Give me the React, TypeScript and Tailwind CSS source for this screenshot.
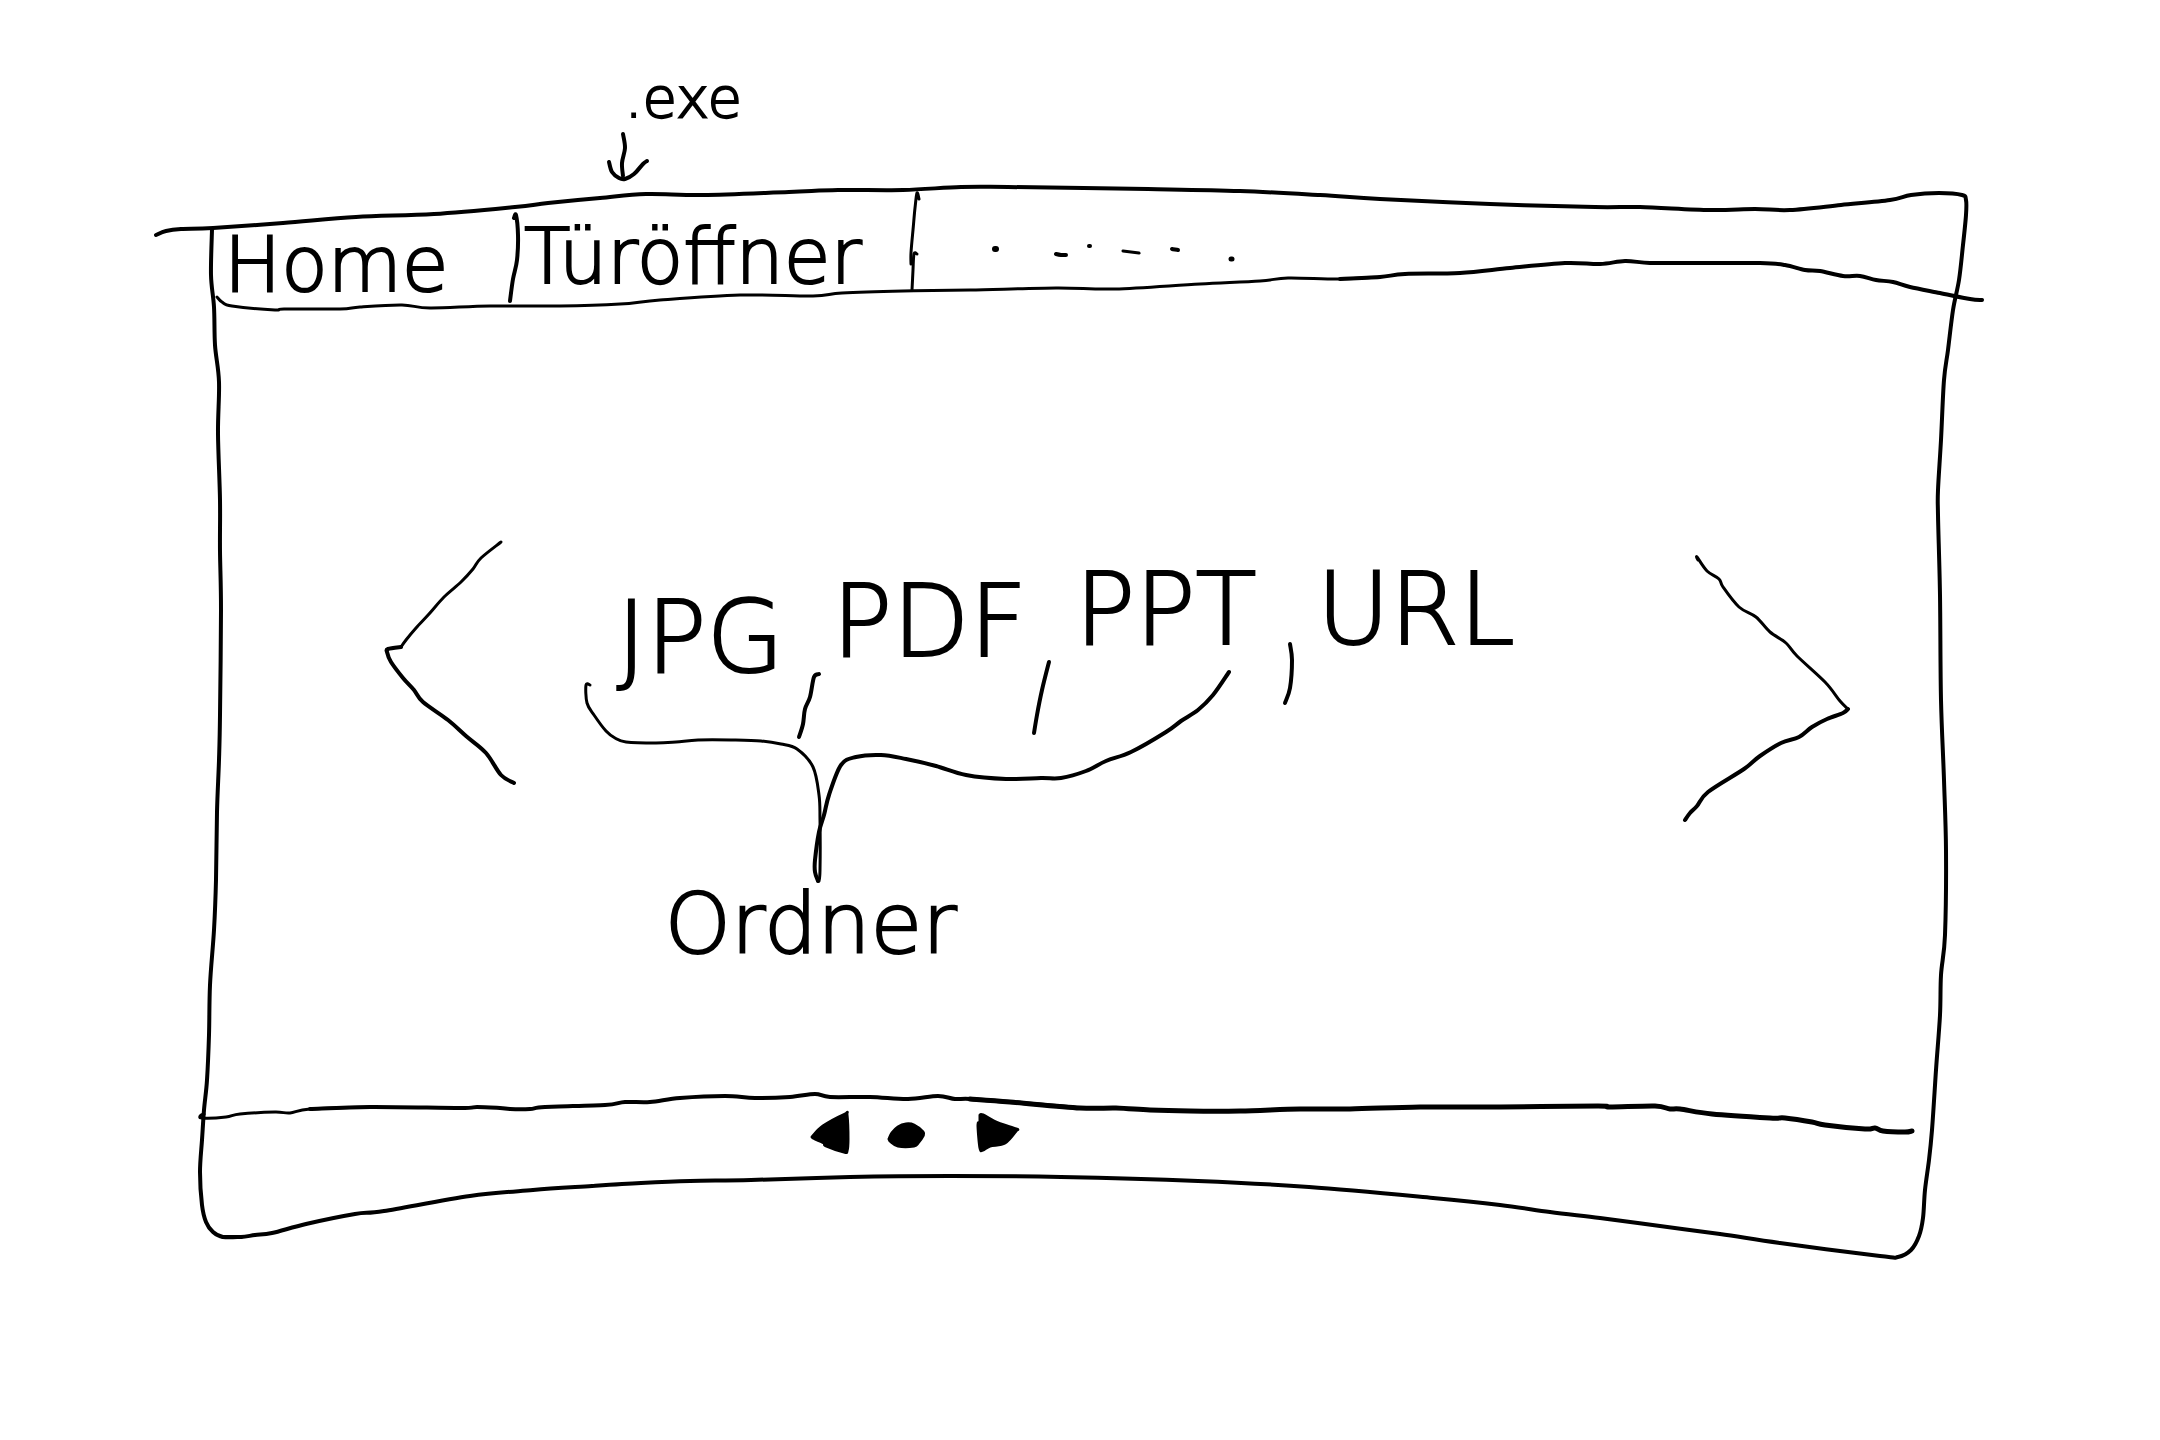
type Point = [number, number];
type Stroke = { pts: Point[]; w?: number; fill?: boolean };

/** Turns pen samples into a smooth curve that passes through each of them. */
function penPath(pts: Point[], closed = false): string {
  if (pts.length === 1) {
    const [x, y] = pts[0];
    return `M${x} ${y}l1 0`;
  }
  const tension = 6;
  let d = `M${pts[0][0]} ${pts[0][1]}`;
  for (let i = 0; i < pts.length - 1; i++) {
    const p0 = pts[Math.max(i - 1, 0)];
    const p1 = pts[i];
    const p2 = pts[i + 1];
    const p3 = pts[Math.min(i + 2, pts.length - 1)];
    const c1x = p1[0] + (p2[0] - p0[0]) / tension;
    const c1y = p1[1] + (p2[1] - p0[1]) / tension;
    const c2x = p2[0] - (p3[0] - p1[0]) / tension;
    const c2y = p2[1] - (p3[1] - p1[1]) / tension;
    d += `C${c1x.toFixed(1)} ${c1y.toFixed(1)} ${c2x.toFixed(1)} ${c2y.toFixed(1)} ${p2[0]} ${p2[1]}`;
  }
  return closed ? `${d}Z` : d;
}

function Ink({ box, strokes, className }: { box: string; strokes: Stroke[]; className: string }) {
  return (
    <svg
      viewBox={box}
      preserveAspectRatio="none"
      aria-hidden="true"
      className={`pointer-events-none shrink-0 overflow-visible ${className}`}
    >
      {strokes.map((s, i) => (
        <path
          key={i}
          d={penPath(s.pts, s.fill)}
          fill={s.fill ? "currentColor" : "none"}
          stroke="currentColor"
          strokeWidth={s.w ?? 4}
          strokeLinecap="round"
          strokeLinejoin="round"
          vectorEffect="non-scaling-stroke"
        />
      ))}
    </svg>
  );
}

const frame: Stroke[] = [
  // top edge, right-hand side and bottom edge
  {
    w: 4,
    pts: [
      [156, 235], [166, 231], [181, 229], [213, 228], [283, 223], [356, 217], [434, 214], [515, 207], [548, 203],
      [600, 198], [646, 194], [703, 195], [789, 192], [838, 190], [903, 190], [961, 187], [1008, 187], [1148, 189],
      [1240, 191], [1320, 195], [1380, 199], [1490, 204], [1595, 207], [1640, 207], [1710, 210], [1755, 209],
      [1790, 210], [1841, 205], [1890, 200], [1911, 195], [1939, 193], [1962, 195], [1966, 200], [1966, 215],
      [1963, 245], [1959, 280], [1953, 310], [1948, 350], [1944, 380], [1941, 440], [1938, 490], [1938, 515],
      [1940, 595], [1941, 700], [1944, 780], [1946, 850], [1945, 935], [1941, 975], [1940, 1015], [1936, 1070],
      [1932, 1130], [1929, 1160], [1925, 1190], [1923, 1218], [1919, 1236], [1911, 1250], [1898, 1257],
      [1880, 1256], [1780, 1243], [1720, 1234], [1660, 1226], [1600, 1218], [1550, 1212], [1500, 1205],
      [1433, 1198], [1309, 1187], [1198, 1181], [1061, 1177], [950, 1176], [850, 1177], [751, 1180], [690, 1181],
      [641, 1183], [592, 1186], [533, 1190], [470, 1196], [384, 1211], [355, 1214], [306, 1224], [272, 1233],
      [255, 1235], [241, 1237], [223, 1237],
    ],
  },
  // left-hand side
  {
    w: 4,
    pts: [
      [241, 1237], [223, 1237], [213, 1232], [206, 1222], [202, 1205], [200, 1172], [202, 1140], [204, 1110],
      [207, 1080], [209, 1035], [210, 985], [214, 930], [216, 880], [217, 812], [219, 760], [220, 715],
      [221, 610], [220, 551], [220, 500], [218, 434], [219, 382], [215, 345], [214, 307], [211, 275], [212, 230],
    ],
  },
  // lower edge of the tab bar
  {
    w: 3,
    pts: [
      [217, 297], [222, 302], [232, 306], [275, 310], [284, 309], [340, 309], [360, 307], [402, 305], [430, 308],
      [490, 306], [560, 306], [620, 304], [660, 300], [740, 295], [813, 296], [842, 293], [903, 291], [970, 290],
      [1056, 288], [1115, 289], [1200, 284], [1260, 281], [1288, 278], [1340, 279], [1380, 277],
    ],
  },
  {
    w: 4,
    pts: [
      [1340, 279], [1380, 277], [1405, 274], [1460, 273], [1510, 268], [1565, 263], [1600, 264], [1625, 261],
      [1650, 263], [1690, 263], [1760, 263], [1785, 265], [1805, 270], [1820, 271], [1843, 276], [1860, 276],
      [1876, 280], [1893, 282], [1910, 287], [1940, 293], [1970, 299], [1982, 300],
    ],
  },
  // upper edge of the control bar
  {
    w: 3,
    pts: [
      [204, 1114], [201, 1115], [202, 1118], [226, 1117], [240, 1114], [275, 1112], [290, 1113], [310, 1109],
      [370, 1107],
    ],
  },
  {
    w: 4,
    pts: [
      [310, 1109], [370, 1107], [460, 1108], [477, 1107], [500, 1108], [510, 1109], [530, 1109], [545, 1107],
      [605, 1105], [625, 1102], [650, 1102], [680, 1098], [725, 1096], [755, 1098], [790, 1097], [815, 1094],
      [830, 1097], [870, 1097], [908, 1099], [938, 1096], [955, 1099], [970, 1099], [1010, 1102], [1080, 1108],
    ],
  },
  {
    w: 5,
    pts: [
      [970, 1099], [1010, 1102], [1080, 1108], [1116, 1108], [1150, 1110], [1190, 1111], [1240, 1111], [1300, 1109],
      [1350, 1109], [1420, 1107], [1500, 1107], [1598, 1106], [1610, 1107], [1655, 1106], [1670, 1109],
      [1680, 1109], [1712, 1114], [1770, 1118], [1785, 1118], [1812, 1122], [1825, 1125], [1865, 1129],
      [1875, 1128], [1883, 1131], [1905, 1132], [1912, 1131],
    ],
  },
];

const downArrow: Stroke[] = [
  { pts: [[622, 134], [624, 148], [621, 163], [622, 176]] },
  { pts: [[608, 162], [611, 172], [618, 178], [624, 179], [633, 174], [642, 164], [646, 161]] },
];

const homeDivider: Stroke[] = [
  { pts: [[514, 218], [516, 215], [518, 235], [517, 260], [513, 279], [510, 301]] },
];

const tabDivider: Stroke[] = [
  { w: 3, pts: [[919, 199], [917, 193], [915, 208], [913, 230], [911, 253], [911, 264]] },
  { w: 3, pts: [[917, 254], [914, 254], [913, 270], [912, 290]] },
];

const moreTabs: Stroke[] = [
  { w: 6, pts: [[995, 249]] },
  { w: 4, pts: [[1056, 254], [1061, 255], [1066, 255]] },
  { w: 4, pts: [[1089, 246]] },
  { w: 3, pts: [[1123, 251], [1139, 253]] },
  { w: 4, pts: [[1172, 249], [1178, 250]] },
  { w: 5, pts: [[1231, 259]] },
];

const previousMark: Stroke[] = [
  {
    w: 3,
    pts: [
      [500, 542], [480, 558], [472, 569], [460, 582], [443, 597], [428, 614], [415, 628], [405, 640], [400, 647],
    ],
  },
  {
    w: 4,
    pts: [
      [400, 647], [387, 649], [386, 652], [390, 662], [402, 678], [413, 690], [422, 702], [447, 720], [465, 736],
      [485, 753], [500, 775], [513, 783],
    ],
  },
];

const nextMark: Stroke[] = [
  {
    w: 3,
    pts: [
      [1698, 560], [1697, 557], [1707, 571], [1719, 579], [1723, 587], [1739, 607], [1756, 617], [1770, 632],
      [1786, 643], [1797, 656], [1825, 682], [1840, 701], [1848, 709],
    ],
  },
  {
    w: 4,
    pts: [
      [1848, 709], [1843, 713], [1827, 719], [1812, 727], [1799, 737], [1781, 743], [1760, 756], [1744, 769],
      [1708, 792], [1697, 806], [1690, 813], [1685, 820],
    ],
  },
];

const tickAfterJpg: Stroke[] = [
  { pts: [[817, 674], [812, 677], [808, 697], [803, 709], [801, 724], [797, 737]] },
];
const tickAfterPdf: Stroke[] = [{ pts: [[1048, 662], [1041, 690], [1036, 715], [1033, 733]] }];
const tickAfterPpt: Stroke[] = [{ pts: [[1287, 644], [1289, 660], [1287, 688], [1282, 703]] }];

const folderBrace: Stroke[] = [
  {
    w: 3,
    pts: [
      [589, 685], [585, 685], [586, 703], [593, 715], [605, 731], [614, 738], [625, 742], [655, 743], [675, 742],
      [697, 740], [730, 740], [760, 741], [780, 744], [796, 749], [812, 767], [818, 795], [819, 820], [819, 870],
      [818, 881],
    ],
  },
  {
    w: 4,
    pts: [
      [817, 881], [814, 872], [814, 860], [818, 832], [823, 815], [828, 795], [840, 765], [855, 757], [880, 755],
      [905, 759], [935, 766], [965, 775], [1005, 779], [1040, 778], [1060, 778], [1085, 771], [1105, 761],
      [1130, 752], [1165, 732], [1180, 721], [1197, 710], [1212, 695], [1228, 672],
    ],
  },
];

const backMark: Stroke[] = [
  {
    fill: true,
    w: 3,
    pts: [
      [812, 1138], [823, 1127], [845, 1115], [847, 1116], [848, 1140], [847, 1152], [844, 1153], [826, 1147],
      [824, 1144], [813, 1139],
    ],
  },
];
const dotMark: Stroke[] = [
  {
    fill: true,
    w: 3,
    pts: [
      [889, 1140], [892, 1134], [898, 1128], [906, 1125], [914, 1126], [923, 1133], [923, 1137], [918, 1144],
      [914, 1147], [898, 1147], [890, 1142],
    ],
  },
];
const forwardMark: Stroke[] = [
  {
    fill: true,
    w: 3,
    pts: [
      [980, 1116], [983, 1116], [998, 1124], [1016, 1130], [1016, 1132], [1005, 1144], [990, 1147], [983, 1151],
      [980, 1149], [978, 1126], [980, 1124],
    ],
  },
];

export default function App() {
  return (
    <main className="relative grid min-h-screen grid-rows-[195fr_105fr_800fr_340fr] bg-white font-['DejaVu_Sans',sans-serif] font-extralight leading-none text-black [-webkit-text-stroke:2px_currentColor]">
      <Ink box="0 0 2160 1440" strokes={frame} className="absolute inset-0 h-full w-full" />

      <header className="flex flex-col items-start justify-end gap-1 pb-3 pl-[28%]">
        <p className="ml-5 text-[56px]">.exe</p>
        <Ink box="604 130 48 53" strokes={downArrow} className="h-[53px] w-12" />
      </header>

      <nav className="flex items-start pl-[10%]" aria-label="Tabs">
        <button type="button" className="-mb-2 w-72 pt-8 pl-2 text-left text-[76px]">
          Home
        </button>
        <Ink box="504 195 16 104" strokes={homeDivider} className="h-26 w-4" />
        <button type="button" className="w-96 pt-6 pl-1 text-left text-[76px]">
          Türöffner
        </button>
        <Ink box="904 195 20 100" strokes={tabDivider} className="h-25 w-5" />
        <button type="button" aria-label="More tabs" className="mt-10 ml-16">
          <Ink box="988 235 252 32" strokes={moreTabs} className="h-8 w-63" />
        </button>
      </nav>

      <section className="flex items-start pr-[14%] pl-[18%]">
        <button type="button" aria-label="Previous" className="mt-60">
          <Ink box="388 540 136 248" strokes={previousMark} className="h-62 w-34" />
        </button>

        <div className="ml-15 pt-65">
          <div className="flex items-start pl-8 text-[100px]">
            <span className="pt-7">JPG</span>
            <Ink box="790 560 32 184" strokes={tickAfterJpg} className="ml-2 h-46 w-8" />
            <span className="ml-2 pt-3">PDF</span>
            <Ink box="1026 560 32 184" strokes={tickAfterPdf} className="h-46 w-8" />
            <span className="ml-4">PPT</span>
            <Ink box="1274 560 32 184" strokes={tickAfterPpt} className="ml-5 h-46 w-8" />
            <span className="ml-2">URL</span>
          </div>
          <Ink box="584 668 648 218" strokes={folderBrace} className="-mt-19 h-[218px] w-162" />
          <p className="-mt-1 ml-20 text-[84px]">Ordner</p>
        </div>

        <button type="button" aria-label="Next" className="mt-64 ml-auto">
          <Ink box="1682 556 176 268" strokes={nextMark} className="h-67 w-44" />
        </button>
      </section>

      <footer className="flex items-start pt-3 pl-[37.4%]">
        <button type="button" aria-label="Back">
          <Ink box="808 1113 44 44" strokes={backMark} className="size-11" />
        </button>
        <button type="button" aria-label="Home position" className="ml-8">
          <Ink box="884 1113 44 44" strokes={dotMark} className="size-11" />
        </button>
        <button type="button" aria-label="Forward" className="ml-12">
          <Ink box="976 1113 44 44" strokes={forwardMark} className="size-11" />
        </button>
      </footer>
    </main>
  );
}
